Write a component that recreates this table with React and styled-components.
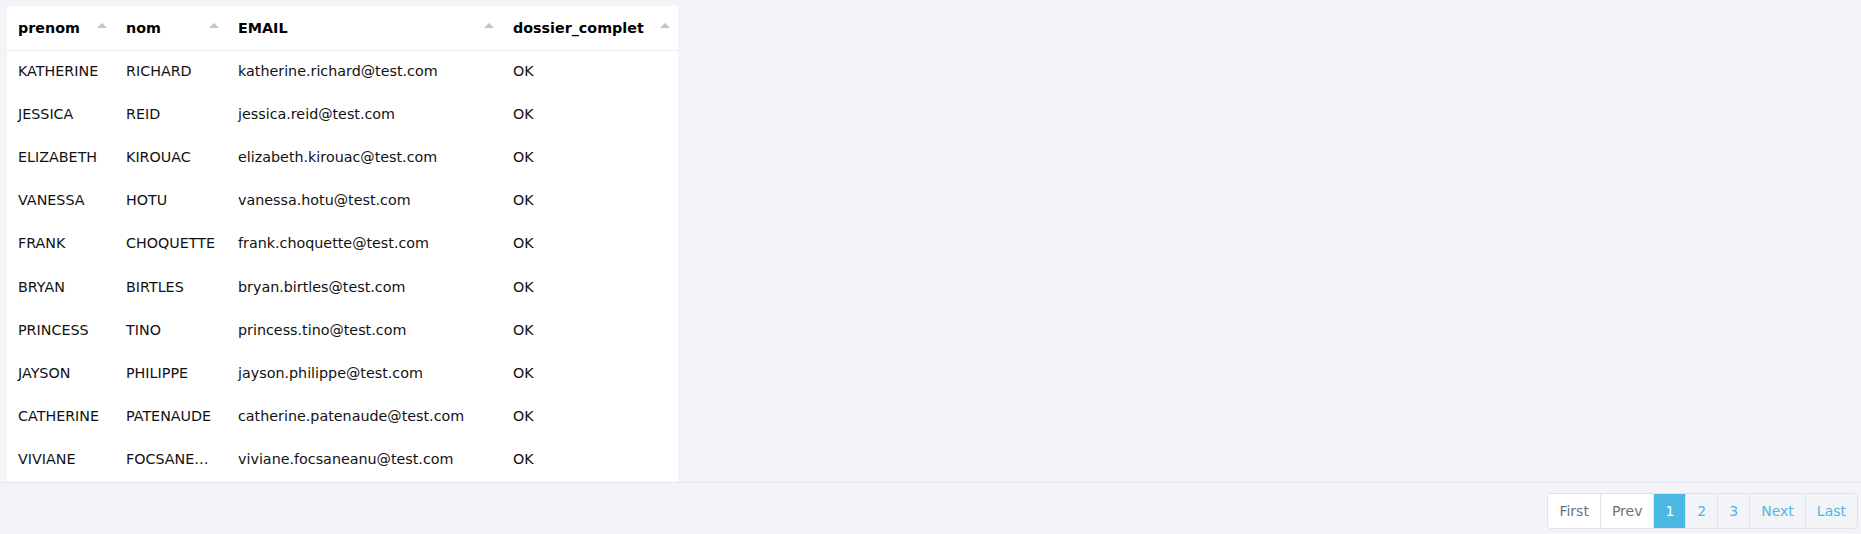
import React from 'react';
import styled, { createGlobalStyle } from 'styled-components';

const GlobalStyle = createGlobalStyle`
    html, body{
        margin: 0;
        padding: 0;
        background: #f3f4f8;
        font-family: "DejaVu Sans", sans-serif;
        font-size: 14px;
        color: #111;
    }
`;

const Page = styled.div`
    width: 100%;
`;

const TableWrap = styled.div`
    padding: 6px 0 0 7px;
    border-bottom: 1px solid #e6e8ee;
`;

const Table = styled.table`
    width: 671px;
    table-layout: fixed;
    border-collapse: collapse;
    background: #fff;
    font-size: 14.3px;

    th, td{
        padding: 0 11px;
        text-align: left;
        white-space: nowrap;
        overflow: hidden;
        text-overflow: ellipsis;
    }
`;

const HeadRow = styled.tr`
    height: 44px;
    border-bottom: 1px solid #e9ebef;
`;

const HeadCell = styled.th`
    position: relative;
    font-weight: bold;
    color: #000;
`;

const Caret = styled.span`
    position: absolute;
    right: 8px;
    top: 17px;
    width: 0;
    height: 0;
    border-left: 5px solid transparent;
    border-right: 5px solid transparent;
    border-bottom: 5px solid #c4c4c4;
`;

const Row = styled.tr`
    height: 43.2px;
`;

const Cell = styled.td`
    padding-bottom: 2px !important;
`;

const Footer = styled.div`
    display: flex;
    justify-content: flex-end;
    padding: 10px 3px 0 0;
`;

const Pager = styled.ul`
    display: flex;
    list-style: none;
    margin: 0;
    padding: 0;
    border: 1px solid #dfe2e7;
    border-radius: 4px;
    overflow: hidden;
`;

const PageBtn = styled.li`
    height: 34px;
    padding: 0 11px;
    display: flex;
    align-items: center;
    font-size: 14px;
    cursor: pointer;
    border-left: 1px solid #dfe2e7;
    background: ${p => p.$active ? '#4bb8e3' : p.$disabled ? '#fff' : 'transparent'};
    color: ${p => p.$active ? '#fff' : p.$disabled ? '#6c757d' : '#4bb8e3'};

    &:first-child{
        border-left: none;
    }
`;

const columns = [
    { key: 'prenom', label: 'prenom', width: 108 },
    { key: 'nom', label: 'nom', width: 112 },
    { key: 'email', label: 'EMAIL', width: 275 },
    { key: 'dossier', label: 'dossier_complet', width: 176 },
];

const rows = [
    ['KATHERINE', 'RICHARD'],
    ['JESSICA', 'REID'],
    ['ELIZABETH', 'KIROUAC'],
    ['VANESSA', 'HOTU'],
    ['FRANK', 'CHOQUETTE'],
    ['BRYAN', 'BIRTLES'],
    ['PRINCESS', 'TINO'],
    ['JAYSON', 'PHILIPPE'],
    ['CATHERINE', 'PATENAUDE'],
    ['VIVIANE', 'FOCSANEANU'],
];

const pages = [
    { label: 'First', disabled: true },
    { label: 'Prev', disabled: true },
    { label: '1', active: true },
    { label: '2' },
    { label: '3' },
    { label: 'Next' },
    { label: 'Last' },
];

const App = () => {
    return(
        <Page>
            <GlobalStyle />
            <TableWrap>
                <Table>
                    <colgroup>
                        {columns.map(c => <col key={c.key} style={{width: c.width}} />)}
                    </colgroup>
                    <thead>
                        <HeadRow>
                            {columns.map(c => (
                                <HeadCell key={c.key}>
                                    {c.label}
                                    <Caret />
                                </HeadCell>
                            ))}
                        </HeadRow>
                    </thead>
                    <tbody>
                        {rows.map(([prenom, nom]) => (
                            <Row key={prenom}>
                                <Cell>{prenom}</Cell>
                                <Cell>{nom}</Cell>
                                <Cell>{`${prenom.toLowerCase()}.${nom.toLowerCase()}@test.com`}</Cell>
                                <Cell>OK</Cell>
                            </Row>
                        ))}
                    </tbody>
                </Table>
            </TableWrap>
            <Footer>
                <Pager>
                    {pages.map(p => (
                        <PageBtn key={p.label} $active={p.active} $disabled={p.disabled}>
                            {p.label}
                        </PageBtn>
                    ))}
                </Pager>
            </Footer>
        </Page>
    );
};

export default App;
